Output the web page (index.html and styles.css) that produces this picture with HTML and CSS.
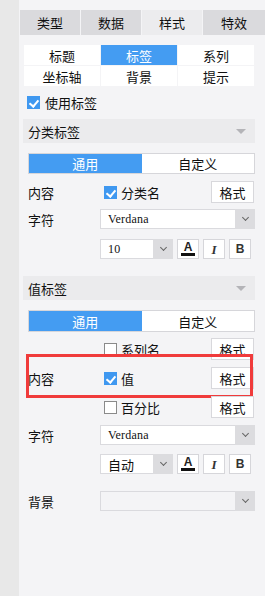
FILE: index.html
```html
<!DOCTYPE html>
<html>
<head>
<meta charset="utf-8">
<link rel="stylesheet" href="styles.css">
</head>
<body>
<div class="app">
  <div class="strip"></div>
  <div class="main">
    <div class="tabs">
      <div class="tab">类型</div>
      <div class="tab">数据</div>
      <div class="tab active">样式</div>
      <div class="tab">特效</div>
    </div>
    <div class="subtabs">
      <div class="st">标题</div>
      <div class="st active">标签</div>
      <div class="st">系列</div>
      <div class="st">坐标轴</div>
      <div class="st">背景</div>
      <div class="st">提示</div>
    </div>
    <div class="use"><span class="cb on"></span><span>使用标签</span></div>

    <div class="section first">
      <div class="sec-head"><span>分类标签</span><span class="tri"></span></div>
      <div class="sec-body">
        <div class="toggle"><div class="tg on">通用</div><div class="tg">自定义</div></div>
        <div class="row r-content1">
          <span class="lbl">内容</span>
          <span class="chk"><span class="cb on"></span><span>分类名</span></span>
          <span class="fmt">格式</span>
        </div>
        <div class="row r-font1">
          <span class="lbl">字符</span>
          <div class="sel wide"><span class="val mono">Verdana</span><span class="arr"><span class="chev"></span></span></div>
        </div>
        <div class="row r-size1">
          <span class="lbl"></span>
          <div class="sel small"><span class="val mono">10</span><span class="arr"><span class="chev"></span></span></div>
          <span class="ib color"><span class="a">A</span><span class="bar"></span></span>
          <span class="ib ital">I</span>
          <span class="ib bold">B</span>
        </div>
      </div>
    </div>

    <div class="section second">
      <div class="sec-head"><span>值标签</span><span class="tri"></span></div>
      <div class="sec-body">
        <div class="toggle t2"><div class="tg on">通用</div><div class="tg">自定义</div></div>
        <div class="row r-series">
          <span class="lbl"></span>
          <span class="chk"><span class="cb"></span><span>系列名</span></span>
          <span class="fmt">格式</span>
        </div>
        <div class="row r-value">
          <span class="lbl">内容</span>
          <span class="chk"><span class="cb on"></span><span>值</span></span>
          <span class="fmt">格式</span>
          <span class="hilite"></span>
        </div>
        <div class="row r-pct">
          <span class="lbl"></span>
          <span class="chk"><span class="cb"></span><span>百分比</span></span>
          <span class="fmt">格式</span>
        </div>
        <div class="row r-font2">
          <span class="lbl">字符</span>
          <div class="sel wide"><span class="val mono">Verdana</span><span class="arr"><span class="chev"></span></span></div>
        </div>
        <div class="row r-size2">
          <span class="lbl"></span>
          <div class="sel small"><span class="val">自动</span><span class="arr"><span class="chev"></span></span></div>
          <span class="ib color"><span class="a">A</span><span class="bar"></span></span>
          <span class="ib ital">I</span>
          <span class="ib bold">B</span>
        </div>
        <div class="row r-bg">
          <span class="lbl">背景</span>
          <div class="sel wide disabled"><span class="val"></span><span class="arr"><span class="chev"></span></span></div>
        </div>
      </div>
    </div>
  </div>
</div>
</body>
</html>
```

FILE: styles.css
```css
* { box-sizing: border-box; }
html, body { margin: 0; padding: 0; }
body {
  width: 265px;
  height: 596px;
  overflow: hidden;
  background: #f4f4f6;
  font-family: "Noto Sans CJK SC", "Noto Sans", sans-serif;
  font-size: 12px;
  color: #111;
}
.app { display: flex; height: 596px; }
.strip { width: 19px; background: #e8e8e8; flex: none; }
.main { flex: 1; padding: 10px 10px 0 4px; position: relative; }

.tabs {
  display: grid;
  grid-template-columns: 60px 60px 60px 62px;
  column-gap: 1px;
  margin-left: -3px;
  margin-right: -10px;
  height: 25px;
}
.tab {
  background: #dadadd;
  display: flex;
  align-items: center;
  justify-content: center;
  font-size: 13px;
  line-height: 1;
}
.tab.active { background: #ececee; }

.subtabs {
  margin: 10px 1px 0 1px;
  display: grid;
  grid-template-columns: 76px 76px 76px;
  grid-auto-rows: 20px;
  gap: 1px 1px;
  height: 41px;
}
.st {
  background: #fff;
  display: flex;
  align-items: center;
  justify-content: center;
  font-size: 13px;
  line-height: 1;
}
.st.active { background: #449cf2; color: #fff; }

.use {
  display: flex;
  align-items: center;
  height: 14px;
  margin-top: 9px;
  padding-left: 4px;
  font-size: 13px;
  line-height: 1;
}
.use .cb { margin-right: 5px; }

.cb {
  width: 13px;
  height: 13px;
  flex: none;
  background: #fff;
  border: 1px solid #8a8a8a;
  position: relative;
}
.cb.on { background: #3f98f0; border-color: #3f98f0; }
.cb.on::after {
  content: "";
  position: absolute;
  left: 3px;
  top: 1px;
  width: 4px;
  height: 7px;
  border: solid #fff;
  border-width: 0 2px 2px 0;
  transform: rotate(40deg);
}

.section.first { margin-top: 10px; }
.section.second { margin-top: 17px; }
.sec-head {
  height: 24px;
  background: #ebebed;
  display: flex;
  align-items: center;
  justify-content: space-between;
  padding: 0 9px 0 5px;
  font-size: 13px;
  line-height: 1;
}
.tri {
  width: 0; height: 0;
  border-left: 5px solid transparent;
  border-right: 5px solid transparent;
  border-top: 5px solid #b4b4b8;
}
.sec-body { padding-left: 5px; }

.toggle {
  margin-top: 10px;
  height: 21px;
  display: flex;
  border: 1px solid #d6d6da;
  background: #fff;
}
.toggle.t2 { height: 22px; }
.tg {
  flex: 1;
  display: flex;
  align-items: center;
  justify-content: center;
  font-size: 13px;
  line-height: 1;
}
.tg.on { background: #449cf2; color: #fff; }

.row {
  display: flex;
  align-items: center;
  position: relative;
  font-size: 13px;
  line-height: 1;
}
.lbl { width: 72px; flex: none; }
.chk { display: flex; align-items: center; margin-left: 4px; flex: 1; }
.chk .cb { margin-right: 4px; }
.fmt {
  width: 43px;
  height: 22px;
  margin-right: 1px;
  background: #fff;
  border: 1px solid #d8d8dc;
  display: flex;
  align-items: center;
  justify-content: center;
  font-size: 13px;
}

.r-content1 { margin-top: 7px; height: 22px; }
.r-font1 { margin-top: 6px; height: 20px; }
.r-size1 { margin-top: 10px; height: 20px; }
.r-series { margin-top: 6px; height: 22px; }
.r-value { margin-top: 7px; height: 22px; }
.r-pct { margin-top: 7px; height: 22px; }
.r-font2 { margin-top: 7px; height: 20px; }
.r-size2 { margin-top: 9px; height: 20px; }
.r-bg { margin-top: 17px; height: 20px; }

.sel {
  height: 20px;
  display: flex;
  background: #fff;
  border: 1px solid #dadade;
  border-right: none;
}
.sel.wide { width: 155px; }
.sel.small { width: 73px; margin-right: 4px; }
.sel.disabled { background: #f4f4f6; }
.sel .val {
  flex: 1;
  display: flex;
  align-items: center;
  padding-left: 7px;
  font-size: 13px;
}
.sel.small .val { padding-left: 7px; }
.mono {
  font-family: "Liberation Serif", serif;
  font-size: 12px !important;
  letter-spacing: 0.2px;
  color: #111;
}
.sel .arr {
  width: 20px;
  background: #dcdcdf;
  margin-top: -1px;
  margin-bottom: -1px;
  display: flex;
  align-items: center;
  justify-content: center;
}
.chev {
  width: 5px; height: 5px;
  border: solid #666;
  border-width: 0 1px 1px 0;
  transform: rotate(45deg);
  margin-top: -3px;
}

.ib {
  width: 22px;
  height: 20px;
  margin-right: 4px;
  background: #fff;
  border: 1px solid #d6d6da;
  display: flex;
  align-items: center;
  justify-content: center;
  flex: none;
}
.ib.color { flex-direction: column; gap: 1px; }
.ib.color .a {
  font-family: "Liberation Sans", sans-serif;
  font-weight: bold;
  font-size: 12px;
  line-height: 10px;
  color: #222;
}
.ib.color .bar { width: 14px; height: 3px; background: #111; }
.ib.ital {
  font-family: "Liberation Serif", serif;
  font-style: italic;
  font-weight: bold;
  font-size: 13px;
  color: #333;
}
.ib.bold {
  font-family: "Liberation Sans", sans-serif;
  font-weight: bold;
  font-size: 12px;
  color: #333;
}

.hilite {
  position: absolute;
  left: -2px;
  right: 2px;
  top: -13px;
  bottom: -9px;
  border: 3px solid #f03b3b;
  pointer-events: none;
}
```
